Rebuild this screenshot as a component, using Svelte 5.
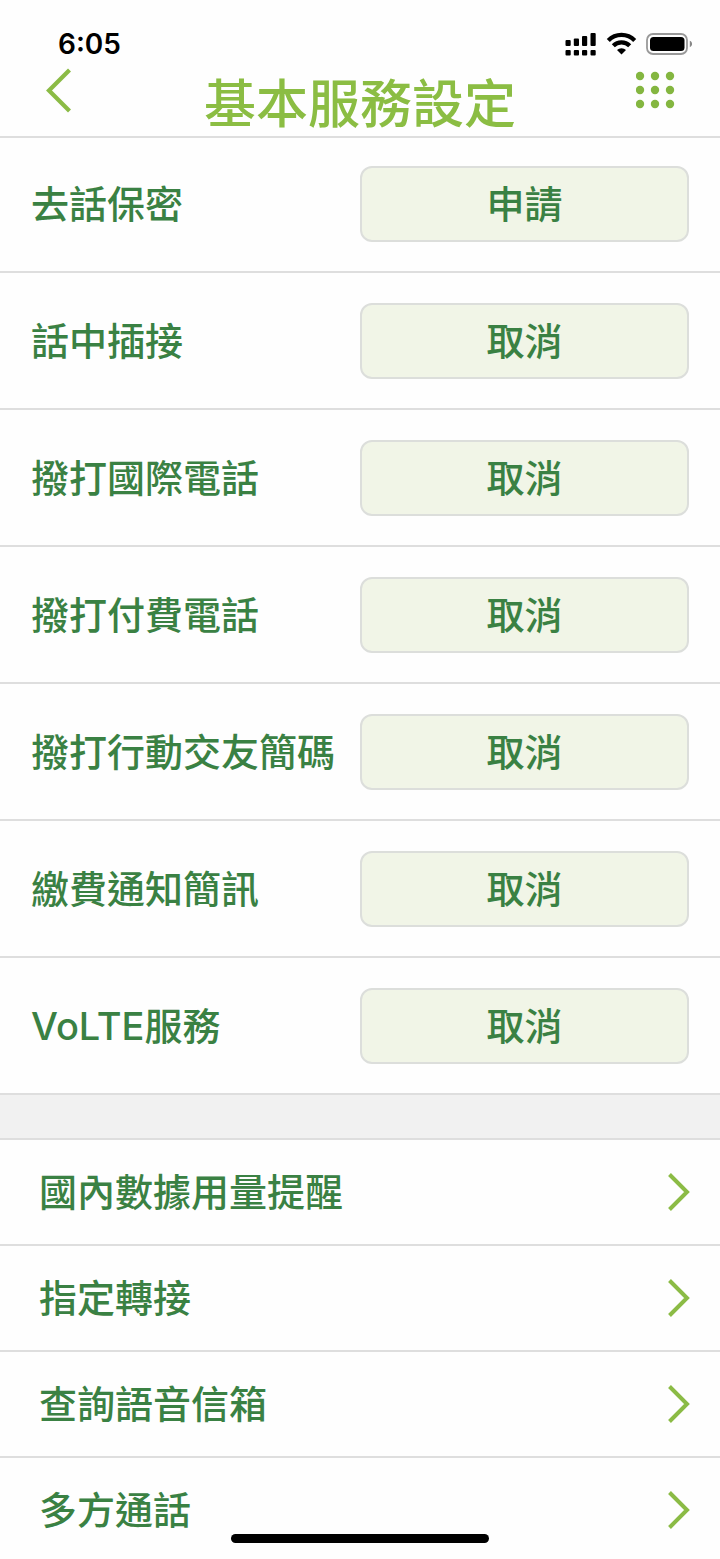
<script>
  let services = $state([
    { name: '去話保密', active: false },
    { name: '話中插接', active: true },
    { name: '撥打國際電話', active: true },
    { name: '撥打付費電話', active: true },
    { name: '撥打行動交友簡碼', active: true },
    { name: '繳費通知簡訊', active: true },
    { name: 'VoLTE服務', active: true },
  ]);

  const links = ['國內數據用量提醒', '指定轉接', '查詢語音信箱', '多方通話'];

  function toggle(service) {
    service.active = !service.active;
  }
</script>

<div class="screen">
  <header>
    <div class="status-bar">
      <span class="time">6:05</span>
      <svg width="128" height="24" viewBox="0 0 128 24" aria-hidden="true">
        <rect x="0.5" y="8" width="5.2" height="6" rx="1" />
        <rect x="8.8" y="6.5" width="5.2" height="7.5" rx="1" />
        <rect x="17" y="4" width="5.2" height="10" rx="1" />
        <rect x="25.5" y="1" width="5.2" height="13" rx="1" />
        <rect x="0.5" y="18" width="5.2" height="5.5" rx="1" />
        <rect x="8.8" y="18" width="5.2" height="5.5" rx="1" />
        <rect x="17" y="18" width="5.2" height="5.5" rx="1" />
        <rect x="25.5" y="18" width="5.2" height="5.5" rx="1" />
        <g fill="none" stroke="#000" stroke-width="4.2">
          <path d="M43.3 8.5a18.2 18.2 0 0 1 26.4 0" />
          <path d="M48.3 13.8a11.4 11.4 0 0 1 16.4 0" />
        </g>
        <path d="M56.5 22.6l-4.5-4.6a6.5 6.5 0 0 1 9 0z" />
        <rect x="82" y="2" width="40" height="20" rx="6" fill="none" stroke="#999" stroke-width="1.8" />
        <rect x="85" y="5" width="34.5" height="14" rx="3.5" />
        <path d="M124.8 8.8c3 1.2 3 5.2 0 6.4z" fill="#888" />
      </svg>
    </div>
    <div class="nav-bar">
      <button class="icon-button" aria-label="返回">
        <svg width="28" height="46" viewBox="0 0 28 46">
          <path d="M25.5 3L5 23.5L25.5 44" fill="none" stroke="#8bbb45" stroke-width="4.2" />
        </svg>
      </button>
      <h1>基本服務設定</h1>
      <button class="icon-button menu" aria-label="選單">
        <svg width="40" height="38" viewBox="0 0 40 38">
          {#each [5, 19, 33] as y}
            {#each [4, 19, 34] as x}
              <circle cx={x} cy={y} r="4.2" fill="#84b640" />
            {/each}
          {/each}
        </svg>
      </button>
    </div>
  </header>

  <main>
    <ul class="services">
      {#each services as service}
        <li>
          <span>{service.name}</span>
          <button class="action" onclick={() => toggle(service)}>
            {service.active ? '取消' : '申請'}
          </button>
        </li>
      {/each}
    </ul>

    <ul class="links">
      {#each links as link}
        <li>
          <a href="#top">
            {link}
            <svg width="24" height="40" viewBox="0 0 24 40" aria-hidden="true">
              <path d="M2.5 2.5L20 20L2.5 37.5" fill="none" stroke="#8bbb45" stroke-width="4" />
            </svg>
          </a>
        </li>
      {/each}
    </ul>
  </main>

  <div class="home-indicator"></div>
</div>

<style>
  :global(body) {
    margin: 0;
    background: #fefefe;
  }

  .screen {
    height: 100vh;
    overflow: hidden;
    color: #3a8143;
    font-family: Inter, 'Noto Sans CJK TC', sans-serif;
    font-size: 38px;
    font-weight: 500;
    line-height: 56px;
  }

  header {
    border-bottom: 2px solid #dedede;
  }

  .status-bar {
    display: flex;
    align-items: center;
    justify-content: space-between;
    height: 40px;
    padding: 24px 27px 0 58px;
  }

  .time {
    color: #000;
    font-size: 28px;
    font-weight: 600;
    line-height: 40px;
  }

  .nav-bar {
    display: flex;
    align-items: flex-start;
    justify-content: space-between;
    height: 72px;
    padding: 0 44px;
  }

  h1 {
    margin: 0;
    color: #8bbd43;
    font-size: 52px;
    font-weight: 500;
    line-height: 82px;
  }

  .icon-button {
    display: flex;
    align-items: center;
    width: 44px;
    height: 52px;
    padding: 0;
    border: none;
    background: none;
    cursor: pointer;
  }

  .menu {
    justify-content: flex-end;
  }

  ul {
    margin: 0;
    padding: 0;
    list-style: none;
  }

  .services li {
    display: flex;
    align-items: center;
    justify-content: space-between;
    padding: 30px 31px 29px;
    border-bottom: 2px solid #dedede;
  }

  .services li:first-child {
    padding-top: 28px;
  }

  .action {
    box-sizing: border-box;
    width: 50%;
    height: 76px;
    padding: 0;
    border: 2px solid #dcdedb;
    border-radius: 12px;
    background: #f1f5e7;
    color: inherit;
    font: inherit;
    cursor: pointer;
  }

  .links {
    border-top: 43px solid #f1f1f1;
  }

  .links li {
    border-bottom: 2px solid #dedede;
  }

  .links li:first-child {
    border-top: 2px solid #dedede;
  }

  a {
    display: flex;
    align-items: center;
    justify-content: space-between;
    height: 104px;
    padding: 0 29px 0 39px;
    color: inherit;
    text-decoration: none;
  }

  .home-indicator {
    position: fixed;
    bottom: 16px;
    left: 50%;
    width: 258px;
    height: 9px;
    border-radius: 5px;
    background: #000;
    transform: translateX(-50%);
  }
</style>
